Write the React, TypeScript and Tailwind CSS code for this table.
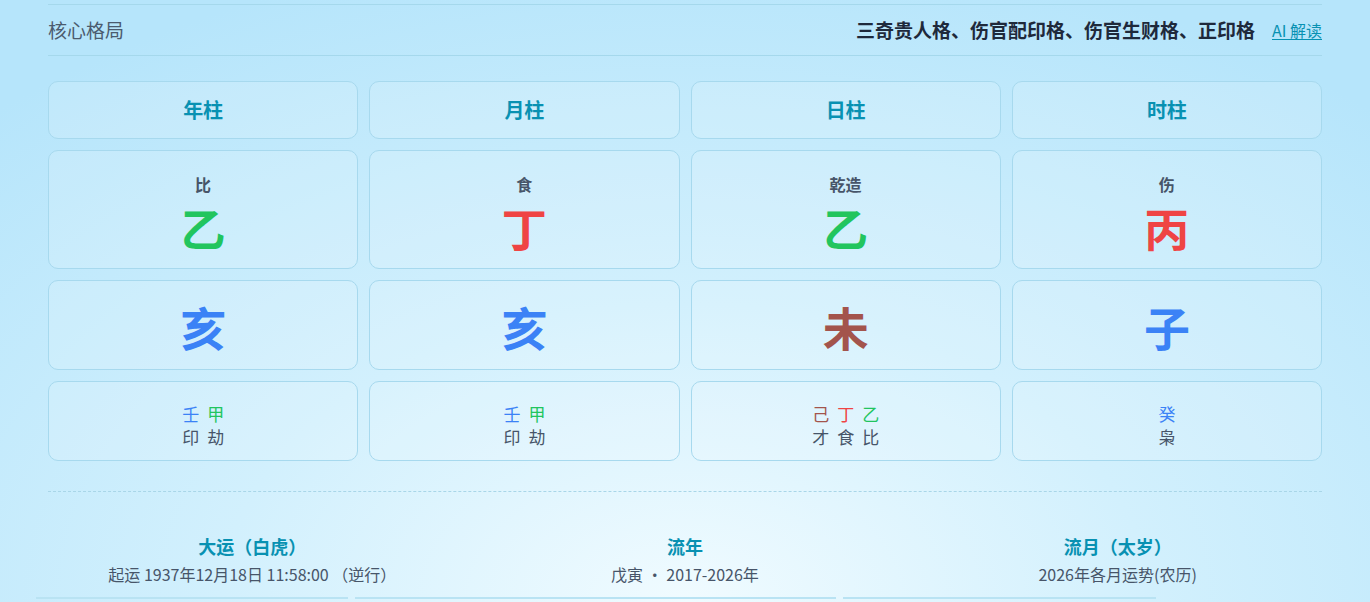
import React from 'react';

// Four pillars data
const pillars = [
    {
        title: '年柱',
        god: '比',
        stem: { ch: '乙', color: 'text-[#22c55e]' },
        branch: { ch: '亥', color: 'text-[#3b82f6]' },
        hidden: [
            { ch: '壬', color: 'text-[#3b82f6]', god: '印' },
            { ch: '甲', color: 'text-[#22c55e]', god: '劫' }
        ]
    },
    {
        title: '月柱',
        god: '食',
        stem: { ch: '丁', color: 'text-[#ef4444]' },
        branch: { ch: '亥', color: 'text-[#3b82f6]' },
        hidden: [
            { ch: '壬', color: 'text-[#3b82f6]', god: '印' },
            { ch: '甲', color: 'text-[#22c55e]', god: '劫' }
        ]
    },
    {
        title: '日柱',
        god: '乾造',
        stem: { ch: '乙', color: 'text-[#22c55e]' },
        branch: { ch: '未', color: 'text-[#a3544c]' },
        hidden: [
            { ch: '己', color: 'text-[#a3544c]', god: '才' },
            { ch: '丁', color: 'text-[#ef4444]', god: '食' },
            { ch: '乙', color: 'text-[#22c55e]', god: '比' }
        ]
    },
    {
        title: '时柱',
        god: '伤',
        stem: { ch: '丙', color: 'text-[#ef4444]' },
        branch: { ch: '子', color: 'text-[#3b82f6]' },
        hidden: [
            { ch: '癸', color: 'text-[#3b82f6]', god: '枭' }
        ]
    }
];

const fortunes = [
    { title: '大运（白虎）', sub: '起运 1937年12月18日 11:58:00 （逆行）' },
    { title: '流年', sub: '戊寅 · 2017-2026年' },
    { title: '流月（太岁）', sub: '2026年各月运势(农历)' }
];

const card = 'rounded-[10px] border border-[#a7d9ee] bg-white/15 flex flex-col items-center justify-center';

const App = () => {
    return (
        <div className="min-h-[602px] h-[602px] overflow-hidden bg-[radial-gradient(ellipse_75%_110%_at_50%_100%,#f0fbff_0%,#d2f0fd_45%,#b6e5fb_100%)] font-['Noto_Sans_CJK_SC','Noto_Sans',sans-serif]">
            <div className="mx-12 pt-1">
                {/* Core pattern header */}
                <div className="h-[52px] border-y border-[#a5d8ec] flex items-center justify-between">
                    <span className="text-[19px] text-[#4b5b6e]">核心格局</span>
                    <div className="flex items-center gap-[17px]">
                        <span className="text-[19px] font-bold text-[#1e293b]">三奇贵人格、伤官配印格、伤官生财格、正印格</span>
                        <a className="text-base text-[#0891b2] underline underline-offset-2 cursor-pointer">AI 解读</a>
                    </div>
                </div>

                {/* Pillars grid */}
                <div className="mt-[25px] grid grid-cols-4 gap-[11px]">
                    {pillars.map(p => (
                        <div key={p.title + 'h'} className={`${card} h-[58px]`}>
                            <span className="text-xl font-bold text-[#0891b2]">{p.title}</span>
                        </div>
                    ))}
                    {pillars.map(p => (
                        <div key={p.title + 's'} className={`${card} h-[119px] gap-[10px] pt-[7px]`}>
                            <span className="text-base leading-5 font-bold text-[#475569]">{p.god}</span>
                            <span className={`text-[45px] leading-[48px] font-bold ${p.stem.color}`}>{p.stem.ch}</span>
                        </div>
                    ))}
                    {pillars.map(p => (
                        <div key={p.title + 'b'} className={`${card} h-[90px] pt-[2px]`}>
                            <span className={`text-[46px] leading-[52px] font-bold ${p.branch.color}`}>{p.branch.ch}</span>
                        </div>
                    ))}
                    {pillars.map(p => (
                        <div key={p.title + 'z'} className={`${card} h-[80px] pt-2`}>
                            <div className="flex gap-2">
                                {p.hidden.map((h, i) => (
                                    <div key={i} className="flex flex-col items-center">
                                        <span className={`text-[17px] leading-[23px] ${h.color}`}>{h.ch}</span>
                                        <span className="text-[17px] leading-[23px] text-[#475569]">{h.god}</span>
                                    </div>
                                ))}
                            </div>
                        </div>
                    ))}
                </div>

                {/* Dashed divider */}
                <div className="mt-[30px] border-t border-dashed border-[#a9d6e8]"></div>

                {/* Fortune sections */}
                <div className="mt-[40px] grid grid-cols-3 gap-6">
                    {fortunes.map(f => (
                        <div key={f.title} className="flex flex-col items-center">
                            <span className="text-lg leading-7 font-bold text-[#0891b2]">{f.title}</span>
                            <span className="mt-[3px] text-base leading-[22px] text-[#475569]">{f.sub}</span>
                        </div>
                    ))}
                </div>

                {/* Cards below (cut off) */}
                <div className="-mx-3 mt-[12px] flex gap-[7px]">
                    <div className="w-[312px] h-6 border-t-2 border-[#b9e3f3]"></div>
                    <div className="w-[481px] h-6 border-t-2 border-[#b9e3f3]"></div>
                    <div className="w-[313px] h-6 border-t-2 border-[#b9e3f3]"></div>
                </div>
            </div>
        </div>
    );
};

export default App;
